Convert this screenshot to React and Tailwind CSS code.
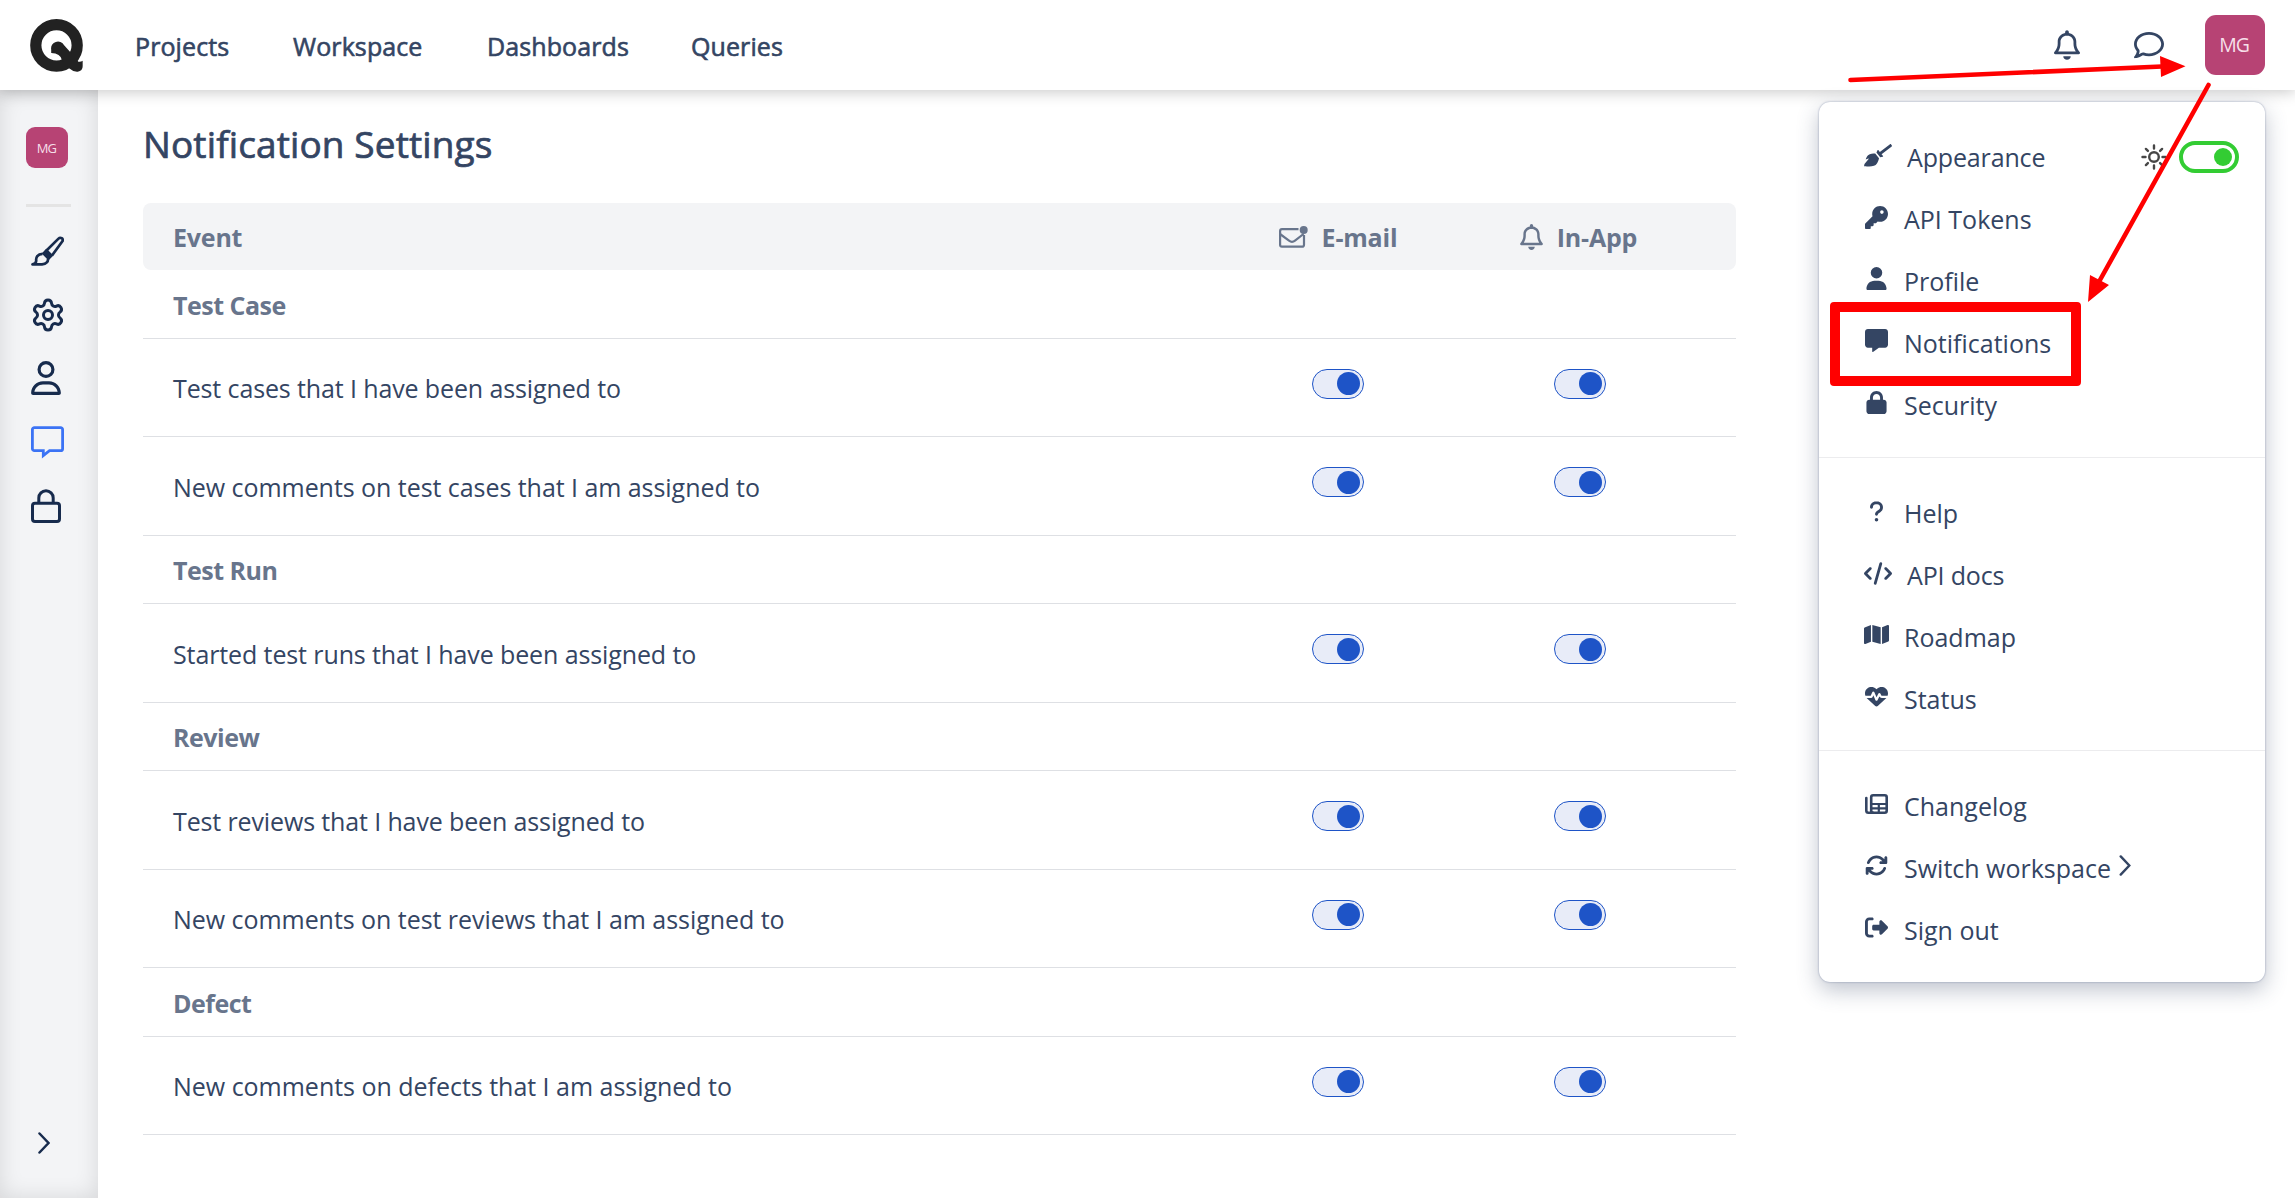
import { FaKey, FaUser, FaMessage, FaLock, FaQuestion, FaCode, FaMap, FaHeartPulse, FaArrowsRotate, FaRightFromBracket, FaRegUser, FaRegComment } from "react-icons/fa6";
import { FaBroom } from "react-icons/fa";
import { Settings } from "lucide-react";

function Bell({ className }) {
  return (
    <svg viewBox="0 0 448 512" className={className} fill="currentColor">
      <path d="M224 0c-17.700 0-32 14.300-32 32V49.900C119.500 61.400 64 124.200 64 200v33.400c0 45.400-15.500 89.500-43.800 124.900L5.300 377c-5.800 7.200-6.900 17.100-2.900 25.400S14.800 416 24 416H424c9.200 0 17.600-5.300 21.600-13.600s2.900-18.200-2.900-25.400l-14.900-18.600C399.500 322.900 384 278.800 384 233.400V200c0-75.800-55.500-138.600-128-150.100V32c0-17.700-14.300-32-32-32zm0 96h8c57.400 0 104 46.600 104 104v33.400c0 47.900 13.900 94.600 39.700 134.600H72.300C98.100 328 112 281.300 112 233.400V200c0-57.400 46.600-104 104-104h8zm64 352H160c0 17 6.700 33.300 18.700 45.300s28.300 18.700 45.300 18.700s33.300-6.700 45.300-18.700s18.700-28.300 18.700-45.300z" />
    </svg>
  );
}

function Logo() {
  return (
    <svg viewBox="60 57 160 160" className="h-[53px] w-[53px]">
      <circle cx="140" cy="136.500" r="62.500" fill="none" stroke="#222" strokeWidth="34" />
      <path fill="#222" d="M124 160V150A21 21.500 0 0 1 163 136L184 160L206 186Q214 187 219 183V200Q219 215 204 216Q190 217 178 206L157 182Q152 161 124 160Z" />
    </svg>
  );
}

function Brush() {
  return (
    <svg viewBox="0 0 33 30" className="h-[30px] w-[33px]" fill="none" stroke="currentColor" strokeWidth="2.7" strokeLinejoin="round">
      <path d="M14.500 15.500L27.500 2.600C29.500 .7 32.700 2.600 31.400 5.300L21 19.500" />
      <path d="M11.500 17.500L15.500 13.500L21.500 19.500L17.500 23.500Z" fill="currentColor" strokeWidth="1.200" />
      <path d="M11.500 17.800C6.500 18 4.800 21.500 5.200 24.500C5.300 26.500 3.800 28 1.500 28.400H11C15.500 28 17.300 25.500 17 22.500" />
    </svg>
  );
}

function MessageOutline() {
  return (
    <svg viewBox="0 0 33 33" className="h-[33px] w-[33px]" fill="none" stroke="currentColor" strokeWidth="2.8" strokeLinejoin="miter">
      <path d="M3.400 1.600H29.600A2 2 0 0 1 31.600 3.600V22.700A2 2 0 0 1 29.600 24.700H18.500L12.300 29.600V24.700H3.400A2 2 0 0 1 1.400 22.700V3.600A2 2 0 0 1 3.400 1.600Z" />
    </svg>
  );
}

function LockOutline() {
  return (
    <svg viewBox="0 0 30 34" className="h-[34px] w-[30px]" fill="none" stroke="currentColor" strokeWidth="3">
      <rect x="1.500" y="14.300" width="27" height="18.200" rx="2.500" />
      <path d="M7.800 14V9a7.200 7.200 0 0 1 14.400 0V14" />
    </svg>
  );
}

function Envelope() {
  return (
    <svg viewBox="0 0 29 24" className="h-[24px] w-[29px]" fill="none" stroke="currentColor" strokeWidth="2.200">
      <path d="M19.500 4.100H3A2 2 0 0 0 1.100 6.100V19.700A2 2 0 0 0 3 21.700H23A2 2 0 0 0 25 19.700V10" />
      <path d="M1 9L10 15.600Q13 18 16 15.600L24.500 9" />
      <circle cx="24.700" cy="5" r="4" fill="currentColor" stroke="none" />
    </svg>
  );
}

function Sun() {
  return (
    <svg viewBox="0 0 26 26" className="h-[26px] w-[26px]" fill="none" stroke="#474747" strokeWidth="2.400">
      <circle cx="13" cy="13" r="4.800" />
      <path strokeLinecap="round" d="M13 1.500V4.500M13 21.500V24.500M1.500 13H4.500M21.500 13H24.500M4.900 4.900L6.900 6.900M19.100 19.100L21.100 21.100M4.900 21.100L6.900 19.100M19.100 6.900L21.100 4.900" />
    </svg>
  );
}

function Newspaper() {
  return (
    <svg viewBox="0 0 23 20" className="h-[20px] w-[23px]" fill="none" stroke="currentColor" strokeWidth="2.600">
      <rect x="6.200" y="1.300" width="15.500" height="17.400" rx="2" />
      <path d="M1.300 4V16.500Q1.300 18.700 3.400 18.700H8" strokeLinecap="round" />
      <path d="M6 10H21.500M6 14.300H21.500M13.800 10V18" strokeWidth="2.200" />
    </svg>
  );
}

function Chevron({ className }) {
  return (
    <svg viewBox="0 0 12 22" className={className} fill="none" stroke="currentColor" strokeWidth="2.500" strokeLinecap="round">
      <path d="M1.500 1.500L10.500 11L1.500 20.500" />
    </svg>
  );
}

function Switch() {
  return (
    <span className="mb-2 flex h-[30px] w-[52px] items-center justify-end rounded-full border border-[#1e54c7] bg-[#e8ecf8] pr-[3px]">
      <span className="size-[23px] rounded-full bg-[#1e54c7]" />
    </span>
  );
}

const nav = [
  { label: "Projects", cls: "w-[158px]" },
  { label: "Workspace", cls: "w-[194px]" },
  { label: "Dashboards", cls: "w-[204px]" },
  { label: "Queries", cls: "" },
];

const rows = [
  { label: "Test Case", group: true, h: "h-[69px]" },
  { label: "Test cases that I have been assigned to", h: "h-[98px]", spacing: "tracking-[-0.12px]" },
  { label: "New comments on test cases that I am assigned to", h: "h-[99px]", spacing: "tracking-[-0.05px]" },
  { label: "Test Run", group: true, h: "h-[68px]" },
  { label: "Started test runs that I have been assigned to", h: "h-[99px]", spacing: "tracking-[-0.11px]" },
  { label: "Review", group: true, h: "h-[68px]" },
  { label: "Test reviews that I have been assigned to", h: "h-[99px]", spacing: "tracking-[-0.13px]" },
  { label: "New comments on test reviews that I am assigned to", h: "h-[98px]", spacing: "tracking-[-0.05px]" },
  { label: "Defect", group: true, h: "h-[69px]" },
  { label: "New comments on defects that I am assigned to", h: "h-[98px]", spacing: "tracking-[-0.02px]" },
];

const groups = [
  {
    pad: "pt-6 pb-[22.500px]",
    items: [
      { label: "Appearance", icon: <FaBroom className="h-[22.500px] w-[28px]" />, wide: true, theme: true },
      { label: "API Tokens", icon: <FaKey /> },
      { label: "Profile", icon: <FaUser /> },
      { label: "Notifications", icon: <FaMessage /> },
      { label: "Security", icon: <FaLock /> },
    ],
  },
  {
    pad: "border-t border-[#ececee] pt-[23.500px] pb-[21px]",
    items: [
      { label: "Help", icon: <FaQuestion /> },
      { label: "API docs", icon: <FaCode className="h-[23px] w-[28px]" />, wide: true },
      { label: "Roadmap", icon: <FaMap className="h-[23px] w-[26px]" /> },
      { label: "Status", icon: <FaHeartPulse /> },
    ],
  },
  {
    pad: "border-t border-[#ececee] pt-[23.500px] pb-[22px]",
    items: [
      { label: "Changelog", icon: <Newspaper /> },
      { label: "Switch workspace", icon: <FaArrowsRotate />, more: true },
      { label: "Sign out", icon: <FaRightFromBracket /> },
    ],
  },
];

function MenuItem({ item }) {
  return (
    <div className="flex h-[61.800px] items-center pr-[26px] pl-[45px]">
      <span className={`mb-[3px] flex items-center justify-center text-[23px] ${item.wide ? "w-[28px]" : "w-[25px]"}`}>{item.icon}</span>
      <span className={`mt-px ${item.wide ? "ml-[15px] tracking-[-0.15px]" : "ml-[15px]"}`}>{item.label}</span>
      {item.more && <Chevron className="mb-1 ml-[8px] h-[21px] w-[12px]" />}
      {item.theme && (
        <span className="ml-auto flex items-center gap-[12px]">
          <Sun />
          <span className="flex h-[32px] w-[60px] items-center justify-end rounded-full border-4 border-[#33cc33] pr-[3px]">
            <span className="size-[18px] rounded-full bg-[#33cc33]" />
          </span>
        </span>
      )}
    </div>
  );
}

export default function App() {
  return (
    <div className="relative flex h-[1198px] w-full flex-col overflow-hidden bg-white font-['Open_Sans',sans-serif] text-[25px] leading-[34px] text-[#344563]">
      <header className="z-10 flex h-[90px] shrink-0 items-center bg-white pr-[30px] pl-[30px] shadow-[0_2px_14px_rgba(0,0,0,0.22)]">
        <Logo />
        <nav className="mt-[2px] ml-[52px] flex tracking-[0.1px] [-webkit-text-stroke:0.6px_#344563]">
          {nav.map((n) => (
            <a key={n.label} className={n.cls}>{n.label}</a>
          ))}
        </nav>
        <div className="ml-auto flex items-center">
          <Bell className="h-[30px] w-[26px]" />
          <FaRegComment className="ml-[54px] size-[30px]" />
          <span className="ml-[41px] flex size-[60px] items-center justify-center rounded-[11px] bg-[#b74374] pr-[2px] text-[19.500px] tracking-[-1.2px] text-[#f6dfe9]">MG</span>
        </div>
      </header>

      <div className="flex min-h-0 flex-1">
        <aside className="flex w-[98px] shrink-0 flex-col bg-[#f3f4f6] pt-[37px] pb-[44px] pl-[26px] text-[#172b4d] shadow-[inset_0_0_22px_rgba(0,0,0,0.12)]">
          <span className="flex h-[41px] w-[42px] items-center justify-center rounded-[9px] bg-[#b74374] pr-px text-[13px] tracking-[-0.7px] text-[#f6dfe9]">MG</span>
          <span className="mt-[36px] h-[3px] w-[45px] bg-[#e4e4e4]" />
          <div className="mt-[29px] flex flex-col items-start pl-[5px]">
            <Brush />
            <Settings className="mt-[31px] -ml-[1.500px] size-[36px]" strokeWidth={2} />
            <FaRegUser className="mt-[28px] -ml-[2px] size-[34px]" />
            <span className="mt-[31px] text-[#3b73f5]"><MessageOutline /></span>
            <span className="mt-[30px]"><LockOutline /></span>
          </div>
          <Chevron className="mt-auto ml-[12px] h-[22px] w-[12px]" />
        </aside>

        <main className="w-[1638px] pl-[45px]">
          <h1 className="mt-[29px] text-[37px] leading-[50px] tracking-[0.12px] [-webkit-text-stroke:0.7px_#344563]">Notification Settings</h1>
          <div className="mt-[34px] grid h-[67px] grid-cols-[1fr_242px_242px] items-center rounded-lg bg-[#f3f4f6] pr-[35px] pl-[30px] font-bold tracking-[-0.2px] text-[#68758c]">
            <span className="mt-px">Event</span>
            <span className="flex items-center justify-center gap-[14px]"><Envelope /><span className="mt-px">E-mail</span></span>
            <span className="flex items-center justify-center gap-[14px] pr-[3px]"><Bell className="h-[26px] w-[23px]" /><span className="mt-px">In-App</span></span>
          </div>
          {rows.map((r) => (
            <div key={r.label} className={`grid grid-cols-[1fr_242px_242px] items-center border-b border-[#dee0e4] pr-[35px] pl-[30px] ${r.h}`}>
              {r.group ? (
                <span className="mt-px font-bold tracking-[-0.5px] text-[#68758c]">{r.label}</span>
              ) : (
                <>
                  <span className={`mt-px ${r.spacing}`}>{r.label}</span>
                  <span className="flex justify-center"><Switch /></span>
                  <span className="flex justify-center pr-px"><Switch /></span>
                </>
              )}
            </div>
          ))}
        </main>
      </div>

      <div className="absolute top-[102px] left-[1819px] z-20 w-[446px] rounded-[11px] bg-white shadow-[0_0_2px_rgba(52,69,120,0.5),0_8px_22px_rgba(52,69,99,0.32)]">
        {groups.map((g) => (
          <div key={g.items[0].label} className={g.pad}>
            {g.items.map((item) => <MenuItem key={item.label} item={item} />)}
          </div>
        ))}
      </div>

      <div className="pointer-events-none absolute top-[302px] left-[1830px] z-30 h-[84px] w-[251px] rounded-[4px] border-[10px] border-[#ff0000]" />
      <svg className="pointer-events-none absolute top-0 left-[1840px] z-30 h-[310px] w-[400px]" viewBox="1840 0 400 310" fill="#ff0000" stroke="#ff0000">
        <path d="M1850.500 80L2162 66.500M2208.500 85L2100 280" strokeWidth="4.600" strokeLinecap="round" />
        <path d="M2160 56L2185.500 66.300L2161 77ZM2090 275L2109 285L2088 302Z" stroke="none" />
      </svg>
    </div>
  );
}
